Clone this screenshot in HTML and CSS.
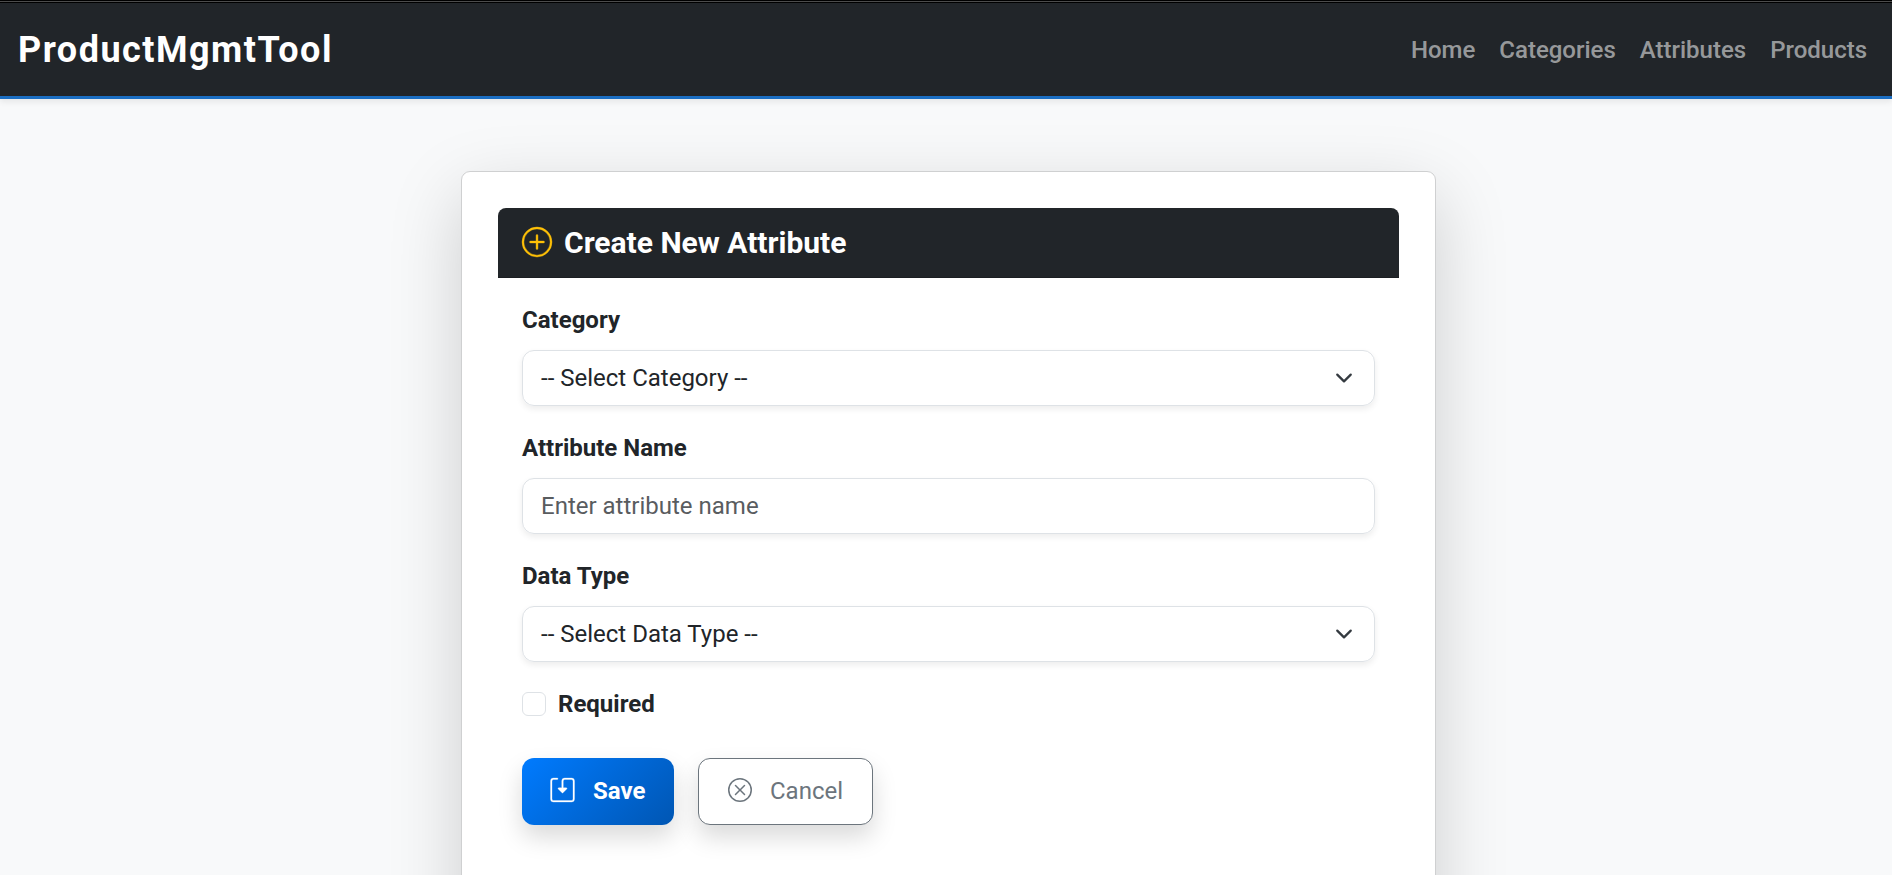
FILE: index.html
```html
<!DOCTYPE html>
<html lang="en">
<head>
<meta charset="utf-8">
<title>Create New Attribute</title>
<link rel="stylesheet" href="styles.css">
</head>
<body>
<div class="topline"></div>
<nav class="navbar">
  <a class="brand">ProductMgmtTool</a>
  <div class="links"><a>Home</a><a>Categories</a><a>Attributes</a><a>Products</a></div>
</nav>
<main class="page">
<section class="card">
  <header class="card-header">
    <svg class="icon-plus" viewBox="0 0 16 16" fill="currentColor"><path d="M8 15A7 7 0 1 1 8 1a7 7 0 0 1 0 14m0 1A8 8 0 1 0 8 0a8 8 0 0 0 0 16"/><path d="M8 4a.5.5 0 0 1 .5.5v3h3a.5.5 0 0 1 0 1h-3v3a.5.5 0 0 1-1 0v-3h-3a.5.5 0 0 1 0-1h3v-3A.5.5 0 0 1 8 4"/></svg>
    <h1 class="title">Create New Attribute</h1>
  </header>
  <form class="form">
    <div class="field">
      <label class="label">Category</label>
      <div class="control"><span>-- Select Category --</span><svg class="chevron" viewBox="0 0 16 16"><path d="m2 5 6 6 6-6"/></svg></div>
    </div>
    <div class="field">
      <label class="label">Attribute Name</label>
      <div class="control placeholder"><span>Enter attribute name</span></div>
    </div>
    <div class="field">
      <label class="label">Data Type</label>
      <div class="control"><span>-- Select Data Type --</span><svg class="chevron" viewBox="0 0 16 16"><path d="m2 5 6 6 6-6"/></svg></div>
    </div>
    <div class="check"><span class="checkbox"></span><label class="check-label">Required</label></div>
    <div class="actions">
      <a class="btn save"><svg class="icon" viewBox="0 0 16 16" fill="currentColor"><path d="M2 1a1 1 0 0 0-1 1v12a1 1 0 0 0 1 1h12a1 1 0 0 0 1-1V2a1 1 0 0 0-1-1H9.500a1 1 0 0 0-1 1v4.500h2a.5.5 0 0 1 .354.854l-2.500 2.500a.5.5 0 0 1-.708 0l-2.500-2.500A.5.5 0 0 1 5.500 6.500h2V2a2 2 0 0 1 2-2H14a2 2 0 0 1 2 2v12a2 2 0 0 1-2 2H2a2 2 0 0 1-2-2V2a2 2 0 0 1 2-2h2.500a.5.5 0 0 1 0 1z"/></svg>Save</a>
      <a class="btn cancel"><svg class="icon" viewBox="0 0 16 16" fill="currentColor"><path d="M8 15A7 7 0 1 1 8 1a7 7 0 0 1 0 14m0 1A8 8 0 1 0 8 0a8 8 0 0 0 0 16"/><path d="M4.646 4.646a.5.5 0 0 1 .708 0L8 7.293l2.646-2.647a.5.5 0 0 1 .708.708L8.707 8l2.647 2.646a.5.5 0 0 1-.708.708L8 8.707l-2.646 2.647a.5.5 0 0 1-.708-.708L7.293 8 4.646 5.354a.5.5 0 0 1 0-.708"/></svg>Cancel</a>
    </div>
  </form>
</section>
</main>
</body>
</html>
```
FILE: styles.css
```css
* { box-sizing: border-box; }
html, body { height: 100%; }
body {
  margin: 0;
  background: #f8f9fa;
  color: #212529;
  font: 400 24px/36px Roboto, sans-serif;
}
.topline { height: 3px; background: #4d4d4d; border-top: 1px solid #000; border-bottom: 1px solid #000; }
.navbar {
  position: relative;
  display: flex;
  align-items: center;
  justify-content: space-between;
  height: 96px;
  padding: 0 25px 0 18px;
  background: #212529;
  border-bottom: 3px solid #1b6ec2;
  box-shadow: 0 3px 6px rgba(0, 0, 0, .075);
}
.brand { color: #fff; font-size: 36px; font-weight: 700; letter-spacing: 1.5px; }
.links { display: flex; gap: 24px; color: rgba(255, 255, 255, .55); font-weight: 500; }
.page { height: calc(100vh - 99px); padding: 72px 0 0 461px; overflow: hidden; }
.card {
  width: 975px;
  height: 765px;
  padding: 36px;
  background: #fff;
  border: 1px solid #cfd0d1;
  border-radius: 9px;
  box-shadow: 0 24px 72px rgba(0, 0, 0, .175);
}
.card-header {
  display: flex;
  align-items: center;
  gap: 11px;
  height: 70px;
  padding: 0 24px;
  color: #fff;
  background: #212529;
  border-bottom: 1px solid #1b1e22;
  border-radius: 8px 8px 0 0;
}
.icon-plus { width: 30px; height: 30px; margin: 0 1px 2px 0; color: #ffc107; stroke: currentColor; stroke-width: .2; overflow: visible; }
.title { margin: 0; font-size: 30px; line-height: 36px; font-weight: 700; }
.form { padding: 24px; }
.field { margin-bottom: 24px; }
.label { display: block; margin-bottom: 12px; font-weight: 700; }
.control {
  display: flex;
  align-items: center;
  justify-content: space-between;
  height: 56px;
  padding: 0 18px;
  border: 1px solid #dee2e6;
  border-radius: 12px;
  box-shadow: 0 3px 6px rgba(0, 0, 0, .075);
}
.placeholder { color: #595c5f; }
.chevron {
  width: 24px;
  height: 18px;
  fill: none;
  stroke: #343a40;
  stroke-width: 2;
  stroke-linecap: round;
  stroke-linejoin: round;
}
.check { display: flex; align-items: center; gap: 12px; margin-bottom: 36px; }
.checkbox { width: 24px; height: 24px; border: 1px solid #dee2e6; border-radius: 6px; }
.check-label { font-weight: 700; }
.actions { display: flex; gap: 24px; }
.btn {
  display: flex;
  align-items: center;
  height: 67px;
  padding-bottom: 1px;
  border-radius: 12px;
  box-shadow: 0 12px 24px rgba(0, 0, 0, .15);
}
.icon { width: 24px; height: 24px; margin-bottom: 2px; }
.save { width: 152px; padding-left: 28px; gap: 18px; color: #fff; font-weight: 700; background: linear-gradient(135deg, #007bff, #0056b3); }
.save .icon { width: 25px; stroke: currentColor; stroke-width: .2; overflow: visible; }
.cancel { width: 175px; padding-left: 29px; gap: 18px; color: #6c757d; background: #fff; border: 1px solid #6c757d; }
```
